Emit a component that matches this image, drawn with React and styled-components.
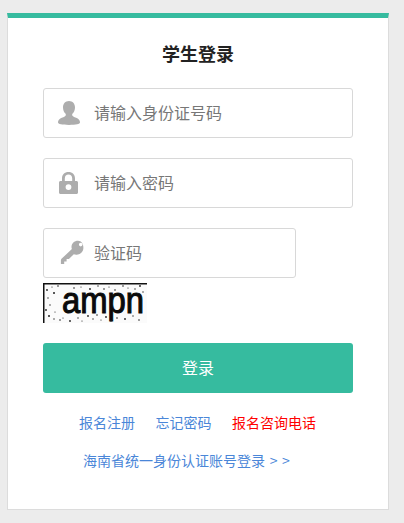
import React from 'react';
import styled, { createGlobalStyle } from 'styled-components';

const GlobalStyle = createGlobalStyle`
    html, body {
        margin: 0;
        padding: 0;
        background: #ececec;
    }
    body {
        font-family: "Noto Sans CJK SC", "Liberation Sans", sans-serif;
    }
`;

const Page = styled.div`
    padding: 13px 0 13px 7px;
`;

const Card = styled.div`
    box-sizing: border-box;
    width: 382px;
    height: 497px;
    background: white;
    border: 1px solid #dcdcdc;
    border-top: 5px solid #36bb9f;
    padding: 0 35px;
`;

const Title = styled.h2`
    margin: 0;
    padding-top: 22px;
    line-height: 26px;
    font-size: 18px;
    font-weight: 700;
    text-align: center;
    color: #222;
`;

const Form = styled.form`
    margin-top: 22px;
    display: flex;
    flex-direction: column;
    gap: 20px;
`;

const CaptchaGroup = styled.div`
    display: flex;
    flex-direction: column;
    gap: 5px;
`;

const Field = styled.label`
    box-sizing: border-box;
    display: flex;
    align-items: center;
    width: ${(props) => props.$width || 310}px;
    height: 50px;
    padding-left: 13px;
    background: white;
    border: 1px solid #d8d8d8;
    border-radius: 3px;
`;

const IconSlot = styled.span`
    display: flex;
    width: 24px;
    height: 26px;
    margin-right: 13px;
    color: #adadad;
    svg {
        overflow: visible;
    }
`;

const Input = styled.input`
    flex: 1;
    min-width: 0;
    border: none;
    outline: none;
    background: none;
    padding: 0 0 2px;
    font-family: inherit;
    font-size: 16px;
    color: #333;
    &::placeholder {
        color: #777;
        opacity: 1;
    }
`;

const CaptchaPicture = styled.svg`
    display: block;
    width: 104px;
    height: 40px;
`;

const SubmitButton = styled.button`
    width: 310px;
    height: 50px;
    border: none;
    border-radius: 3px;
    background: #36bb9f;
    color: white;
    padding: 0 0 2px;
    font-family: inherit;
    font-size: 16px;
    cursor: pointer;
`;

const LinkRow = styled.div`
    margin-top: 19px;
    height: 20px;
    padding-left: 36px;
    display: flex;
    gap: 20.5px;
    line-height: 20px;
    font-size: 14px;
`;

const FootRow = styled.div`
    margin-top: 18px;
    height: 20px;
    padding-left: 40px;
    line-height: 20px;
    font-size: 14px;
    word-spacing: 1.5px;
`;

const TextLink = styled.a`
    color: ${(props) => props.$color || '#4a86d8'};
    text-decoration: none;
    cursor: pointer;
`;

const UserIcon = () => (
    <svg width="24" height="26" viewBox="0 0 24 26" fill="currentColor">
        <path d="M12 1C8.300 1 6 3.800 6 7.400c0 2.600 1 4.700 2.400 6 .5.500.6 1.500.1 2.300-.7 1-3.300 1.800-5.200 2.900C1.500 19.700 1 21.300 1 22.600 1 24.200 5 25 12 25s11-.8 11-2.400c0-1.300-.5-2.900-2.300-4-1.900-1.100-4.500-1.900-5.200-2.900-.5-.8-.4-1.800.1-2.300 1.400-1.300 2.400-3.400 2.400-6C18 3.800 15.700 1 12 1z" />
    </svg>
);

const LockIcon = () => (
    <svg width="24" height="26" viewBox="0 0 24 26" fill="currentColor">
        <path
            fillRule="evenodd"
            d="M11.500 2C7.600 2 5 4.700 5 8.400V11H3.500C2.700 11 2 11.700 2 12.500v10C2 23.300 2.700 24 3.500 24h16c.8 0 1.500-.7 1.500-1.500v-10c0-.8-.7-1.500-1.500-1.500H18V8.400C18 4.700 15.400 2 11.500 2zM7.800 11V8.500c0-2.400 1.500-3.900 3.700-3.900s3.700 1.500 3.700 3.900V11H7.800zM11.500 14.200a2.900 2.900 0 1 1 0 5.800 2.900 2.900 0 0 1 0-5.800z"
        />
    </svg>
);

const KeyIcon = () => (
    <svg width="24" height="26" viewBox="0 0 24 26" fill="currentColor">
        <path
            fillRule="evenodd"
            d="M21 .8c-3.700 0-6.500 2.700-6.500 6.200 0 .8.100 1.500.4 2.100L4.500 18.800c-.4.400-.6.900-.6 1.400V24h3.300v-2.400h2.400v-2.500l2.300-.2 4.900-4.700c1.100.5 2.500.6 4 .3 3.300-.7 5.600-3.300 5.600-6.800C26.400 4 24.500.8 21 .8zm2.700 2a1.800 1.800 0 1 1 0 3.600 1.800 1.800 0 0 1 0-3.600z"
        />
    </svg>
);

// speckle noise of the captcha picture: x, y, radius
const NOISE = [
    [4, 7, 0.9], [9, 4, 0.6], [15, 3, 0.8], [5, 15, 0.7], [11, 10, 1], [7, 22, 0.7], [3, 27, 0.9], [12, 29, 0.6],
    [6, 33, 1], [11, 36, 0.7], [17, 37, 0.8], [20, 35, 0.6], [27, 38, 0.9], [31, 5, 0.8], [38, 4, 0.6], [47, 6, 0.9],
    [55, 3, 0.7], [61, 6, 0.8], [66, 4, 0.6], [72, 7, 0.8], [80, 3, 0.8], [85, 5, 0.6], [92, 6, 0.7], [97, 3, 0.9],
    [100, 9, 0.7], [45, 33, 0.9], [50, 36, 0.7], [54, 32, 0.8], [58, 37, 0.6], [63, 34, 0.9], [68, 38, 0.7], [74, 35, 0.8],
    [82, 36, 0.9], [90, 33, 0.7], [96, 37, 0.8], [35, 35, 0.7], [39, 38, 0.6],
];

const CaptchaImage = () => (
    <CaptchaPicture viewBox="0 0 104 40">
        <rect width="104" height="40" fill="#fbfbfb" />
        <rect width="104" height="1.500" fill="#111" />
        <rect width="1.500" height="40" fill="#111" />
        <text x="19" y="30" fontFamily="Liberation Sans, sans-serif" fontSize="36" stroke="#0a0a0a" strokeWidth="1.1" fill="#0a0a0a" textLength="82" lengthAdjust="spacingAndGlyphs">ampn</text>
        {NOISE.map(([x, y, r]) => (
            <circle key={`${x}-${y}`} cx={x} cy={y} r={r} fill="#222" />
        ))}
    </CaptchaPicture>
);

export default function App() {
    return (
        <Page>
            <GlobalStyle />
            <Card>
                <Title>学生登录</Title>
                <Form onSubmit={(e) => e.preventDefault()}>
                    <Field>
                        <IconSlot><UserIcon /></IconSlot>
                        <Input type="text" placeholder="请输入身份证号码" />
                    </Field>
                    <Field>
                        <IconSlot><LockIcon /></IconSlot>
                        <Input type="password" placeholder="请输入密码" />
                    </Field>
                    <CaptchaGroup>
                        <Field $width={253}>
                            <IconSlot><KeyIcon /></IconSlot>
                            <Input type="text" placeholder="验证码" />
                        </Field>
                        <CaptchaImage />
                    </CaptchaGroup>
                    <SubmitButton type="submit">登录</SubmitButton>
                </Form>
                <LinkRow>
                    <TextLink>报名注册</TextLink>
                    <TextLink>忘记密码</TextLink>
                    <TextLink $color="#ff0000">报名咨询电话</TextLink>
                </LinkRow>
                <FootRow>
                    <TextLink>海南省统一身份认证账号登录 &gt; &gt;</TextLink>
                </FootRow>
            </Card>
        </Page>
    );
}
